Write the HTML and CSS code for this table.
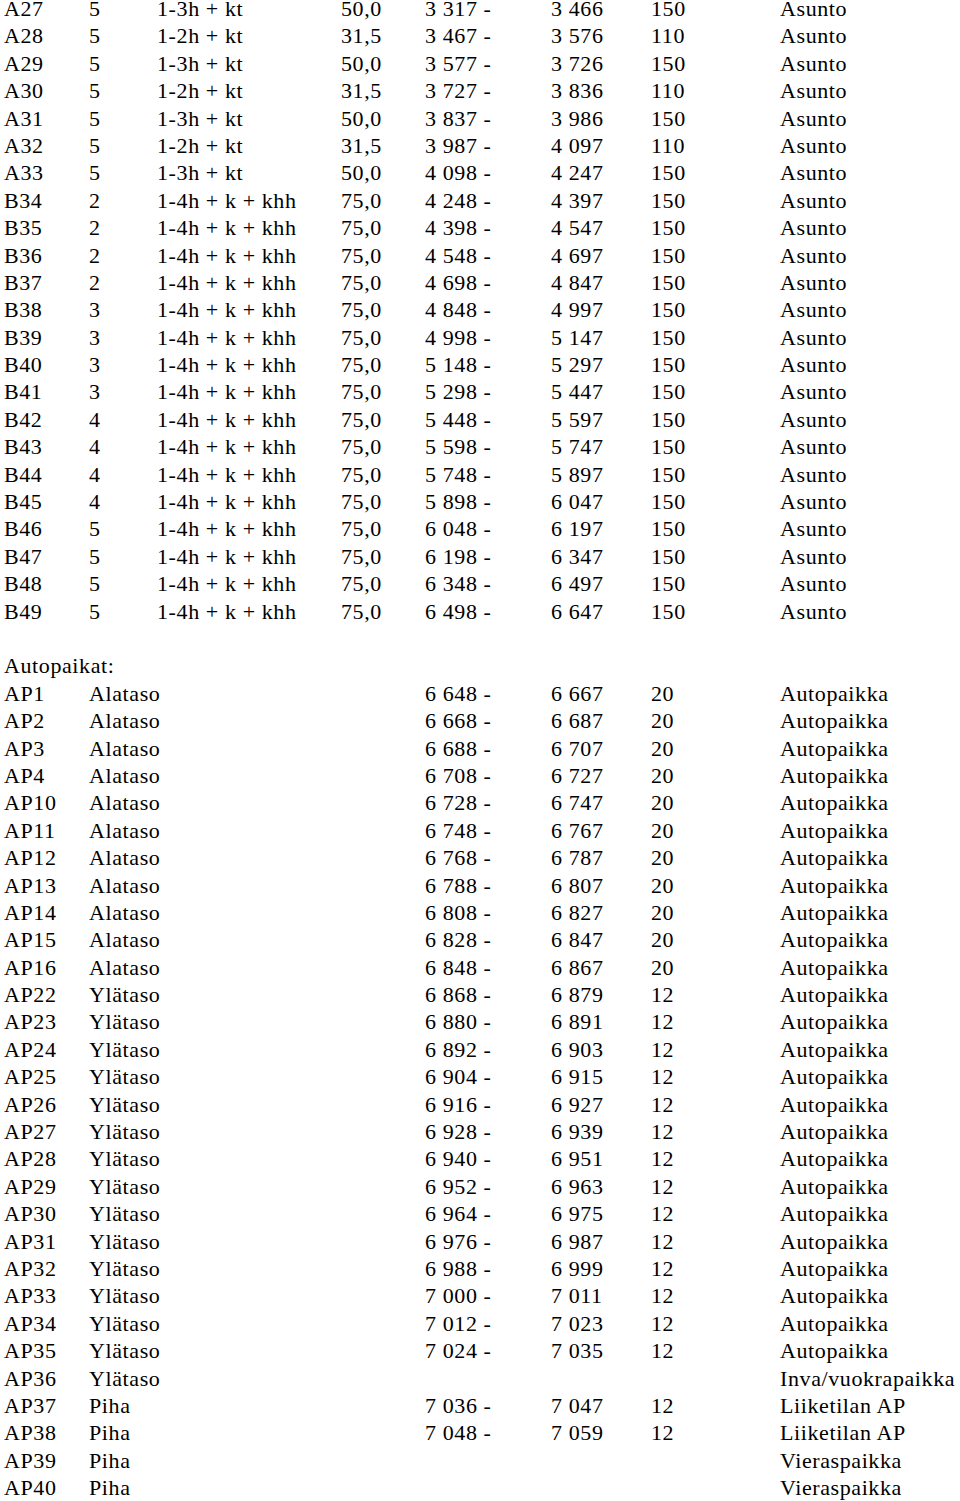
FILE: index.html
```html
<!DOCTYPE html>
<html lang="fi">
<head>
<meta charset="utf-8">
<title>Huoneistoluettelo</title>
<link rel="stylesheet" href="styles.css">
</head>
<body>
<div class="list">
<div class="row"><span>A27</span><span>5</span><span>1-3h + kt</span><span>50,0</span><span>3 317 -</span><span>3 466</span><span>150</span><span>Asunto</span></div>
<div class="row"><span>A28</span><span>5</span><span>1-2h + kt</span><span>31,5</span><span>3 467 -</span><span>3 576</span><span>110</span><span>Asunto</span></div>
<div class="row"><span>A29</span><span>5</span><span>1-3h + kt</span><span>50,0</span><span>3 577 -</span><span>3 726</span><span>150</span><span>Asunto</span></div>
<div class="row"><span>A30</span><span>5</span><span>1-2h + kt</span><span>31,5</span><span>3 727 -</span><span>3 836</span><span>110</span><span>Asunto</span></div>
<div class="row"><span>A31</span><span>5</span><span>1-3h + kt</span><span>50,0</span><span>3 837 -</span><span>3 986</span><span>150</span><span>Asunto</span></div>
<div class="row"><span>A32</span><span>5</span><span>1-2h + kt</span><span>31,5</span><span>3 987 -</span><span>4 097</span><span>110</span><span>Asunto</span></div>
<div class="row"><span>A33</span><span>5</span><span>1-3h + kt</span><span>50,0</span><span>4 098 -</span><span>4 247</span><span>150</span><span>Asunto</span></div>
<div class="row"><span>B34</span><span>2</span><span>1-4h + k + khh</span><span>75,0</span><span>4 248 -</span><span>4 397</span><span>150</span><span>Asunto</span></div>
<div class="row"><span>B35</span><span>2</span><span>1-4h + k + khh</span><span>75,0</span><span>4 398 -</span><span>4 547</span><span>150</span><span>Asunto</span></div>
<div class="row"><span>B36</span><span>2</span><span>1-4h + k + khh</span><span>75,0</span><span>4 548 -</span><span>4 697</span><span>150</span><span>Asunto</span></div>
<div class="row"><span>B37</span><span>2</span><span>1-4h + k + khh</span><span>75,0</span><span>4 698 -</span><span>4 847</span><span>150</span><span>Asunto</span></div>
<div class="row"><span>B38</span><span>3</span><span>1-4h + k + khh</span><span>75,0</span><span>4 848 -</span><span>4 997</span><span>150</span><span>Asunto</span></div>
<div class="row"><span>B39</span><span>3</span><span>1-4h + k + khh</span><span>75,0</span><span>4 998 -</span><span>5 147</span><span>150</span><span>Asunto</span></div>
<div class="row"><span>B40</span><span>3</span><span>1-4h + k + khh</span><span>75,0</span><span>5 148 -</span><span>5 297</span><span>150</span><span>Asunto</span></div>
<div class="row"><span>B41</span><span>3</span><span>1-4h + k + khh</span><span>75,0</span><span>5 298 -</span><span>5 447</span><span>150</span><span>Asunto</span></div>
<div class="row"><span>B42</span><span>4</span><span>1-4h + k + khh</span><span>75,0</span><span>5 448 -</span><span>5 597</span><span>150</span><span>Asunto</span></div>
<div class="row"><span>B43</span><span>4</span><span>1-4h + k + khh</span><span>75,0</span><span>5 598 -</span><span>5 747</span><span>150</span><span>Asunto</span></div>
<div class="row"><span>B44</span><span>4</span><span>1-4h + k + khh</span><span>75,0</span><span>5 748 -</span><span>5 897</span><span>150</span><span>Asunto</span></div>
<div class="row"><span>B45</span><span>4</span><span>1-4h + k + khh</span><span>75,0</span><span>5 898 -</span><span>6 047</span><span>150</span><span>Asunto</span></div>
<div class="row"><span>B46</span><span>5</span><span>1-4h + k + khh</span><span>75,0</span><span>6 048 -</span><span>6 197</span><span>150</span><span>Asunto</span></div>
<div class="row"><span>B47</span><span>5</span><span>1-4h + k + khh</span><span>75,0</span><span>6 198 -</span><span>6 347</span><span>150</span><span>Asunto</span></div>
<div class="row"><span>B48</span><span>5</span><span>1-4h + k + khh</span><span>75,0</span><span>6 348 -</span><span>6 497</span><span>150</span><span>Asunto</span></div>
<div class="row"><span>B49</span><span>5</span><span>1-4h + k + khh</span><span>75,0</span><span>6 498 -</span><span>6 647</span><span>150</span><span>Asunto</span></div>
<div class="row blank"></div>
<div class="row heading">Autopaikat:</div>
<div class="row"><span>AP1</span><span>Alataso</span><span></span><span></span><span>6 648 -</span><span>6 667</span><span>20</span><span>Autopaikka</span></div>
<div class="row"><span>AP2</span><span>Alataso</span><span></span><span></span><span>6 668 -</span><span>6 687</span><span>20</span><span>Autopaikka</span></div>
<div class="row"><span>AP3</span><span>Alataso</span><span></span><span></span><span>6 688 -</span><span>6 707</span><span>20</span><span>Autopaikka</span></div>
<div class="row"><span>AP4</span><span>Alataso</span><span></span><span></span><span>6 708 -</span><span>6 727</span><span>20</span><span>Autopaikka</span></div>
<div class="row"><span>AP10</span><span>Alataso</span><span></span><span></span><span>6 728 -</span><span>6 747</span><span>20</span><span>Autopaikka</span></div>
<div class="row"><span>AP11</span><span>Alataso</span><span></span><span></span><span>6 748 -</span><span>6 767</span><span>20</span><span>Autopaikka</span></div>
<div class="row"><span>AP12</span><span>Alataso</span><span></span><span></span><span>6 768 -</span><span>6 787</span><span>20</span><span>Autopaikka</span></div>
<div class="row"><span>AP13</span><span>Alataso</span><span></span><span></span><span>6 788 -</span><span>6 807</span><span>20</span><span>Autopaikka</span></div>
<div class="row"><span>AP14</span><span>Alataso</span><span></span><span></span><span>6 808 -</span><span>6 827</span><span>20</span><span>Autopaikka</span></div>
<div class="row"><span>AP15</span><span>Alataso</span><span></span><span></span><span>6 828 -</span><span>6 847</span><span>20</span><span>Autopaikka</span></div>
<div class="row"><span>AP16</span><span>Alataso</span><span></span><span></span><span>6 848 -</span><span>6 867</span><span>20</span><span>Autopaikka</span></div>
<div class="row"><span>AP22</span><span>Ylätaso</span><span></span><span></span><span>6 868 -</span><span>6 879</span><span>12</span><span>Autopaikka</span></div>
<div class="row"><span>AP23</span><span>Ylätaso</span><span></span><span></span><span>6 880 -</span><span>6 891</span><span>12</span><span>Autopaikka</span></div>
<div class="row"><span>AP24</span><span>Ylätaso</span><span></span><span></span><span>6 892 -</span><span>6 903</span><span>12</span><span>Autopaikka</span></div>
<div class="row"><span>AP25</span><span>Ylätaso</span><span></span><span></span><span>6 904 -</span><span>6 915</span><span>12</span><span>Autopaikka</span></div>
<div class="row"><span>AP26</span><span>Ylätaso</span><span></span><span></span><span>6 916 -</span><span>6 927</span><span>12</span><span>Autopaikka</span></div>
<div class="row"><span>AP27</span><span>Ylätaso</span><span></span><span></span><span>6 928 -</span><span>6 939</span><span>12</span><span>Autopaikka</span></div>
<div class="row"><span>AP28</span><span>Ylätaso</span><span></span><span></span><span>6 940 -</span><span>6 951</span><span>12</span><span>Autopaikka</span></div>
<div class="row"><span>AP29</span><span>Ylätaso</span><span></span><span></span><span>6 952 -</span><span>6 963</span><span>12</span><span>Autopaikka</span></div>
<div class="row"><span>AP30</span><span>Ylätaso</span><span></span><span></span><span>6 964 -</span><span>6 975</span><span>12</span><span>Autopaikka</span></div>
<div class="row"><span>AP31</span><span>Ylätaso</span><span></span><span></span><span>6 976 -</span><span>6 987</span><span>12</span><span>Autopaikka</span></div>
<div class="row"><span>AP32</span><span>Ylätaso</span><span></span><span></span><span>6 988 -</span><span>6 999</span><span>12</span><span>Autopaikka</span></div>
<div class="row"><span>AP33</span><span>Ylätaso</span><span></span><span></span><span>7 000 -</span><span>7 011</span><span>12</span><span>Autopaikka</span></div>
<div class="row"><span>AP34</span><span>Ylätaso</span><span></span><span></span><span>7 012 -</span><span>7 023</span><span>12</span><span>Autopaikka</span></div>
<div class="row"><span>AP35</span><span>Ylätaso</span><span></span><span></span><span>7 024 -</span><span>7 035</span><span>12</span><span>Autopaikka</span></div>
<div class="row"><span>AP36</span><span>Ylätaso</span><span></span><span></span><span></span><span></span><span></span><span>Inva/vuokrapaikka</span></div>
<div class="row"><span>AP37</span><span>Piha</span><span></span><span></span><span>7 036 -</span><span>7 047</span><span>12</span><span>Liiketilan AP</span></div>
<div class="row"><span>AP38</span><span>Piha</span><span></span><span></span><span>7 048 -</span><span>7 059</span><span>12</span><span>Liiketilan AP</span></div>
<div class="row"><span>AP39</span><span>Piha</span><span></span><span></span><span></span><span></span><span></span><span>Vieraspaikka</span></div>
<div class="row"><span>AP40</span><span>Piha</span><span></span><span></span><span></span><span></span><span></span><span>Vieraspaikka</span></div>
</div>
</body>
</html>
```

FILE: styles.css
```css
html, body {
  margin: 0;
  padding: 0;
  background: #ffffff;
}

body {
  font-family: "Liberation Serif", "Times New Roman", serif;
  font-size: 22px;
  letter-spacing: 0.6px;
  color: #000000;
  overflow: hidden;
}

.list {
  padding-left: 4px;
}

.row {
  display: grid;
  grid-template-columns: 85px 68px 184px 84px 126px 100px 129px auto;
  align-items: start;
  height: 27.4px;
  line-height: 18px;
  white-space: nowrap;
}

.row.heading {
  display: block;
}
```
